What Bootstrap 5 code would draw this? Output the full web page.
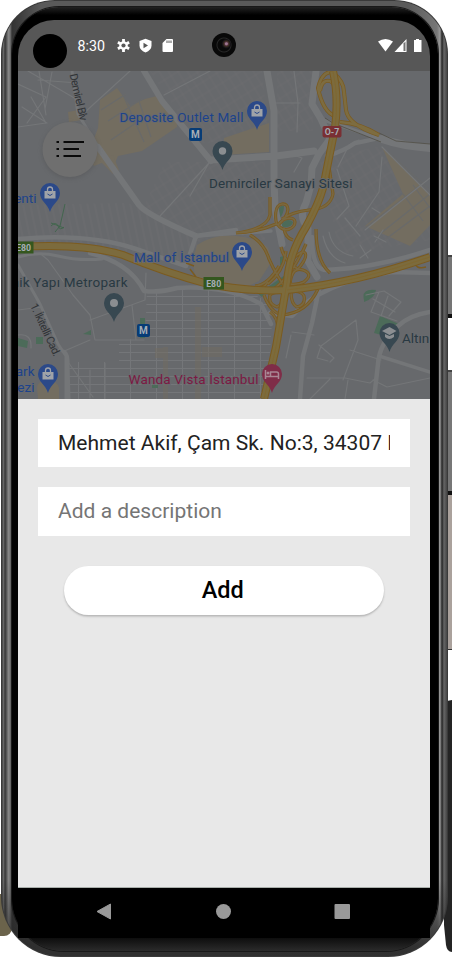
<!DOCTYPE html>
<html lang="en">
<head>
<meta charset="utf-8">
<meta name="viewport" content="width=device-width, initial-scale=1">
<title>Add address</title>
<link href="https://cdn.jsdelivr.net/npm/bootstrap@5.3.0/dist/css/bootstrap.min.css" rel="stylesheet">
<style>
body{width:452px;height:957px;font-family:Roboto,"Noto Sans",sans-serif;background:#fff}
.desk{width:452px;height:957px}
.desk-left{left:0;top:894px;width:12px;height:42px;background:#6b634b;border-radius:0 0 8px 0}
.desk-right{left:444px;top:0;width:8px;height:957px}
.device{width:447px;height:957px;margin-left:1px;border-radius:54px 54px 60px 60px;padding:7px 10px 6px 11px;box-shadow:inset 0 0 0 1px #3a3a3a;
 background:linear-gradient(transparent 0 880px,#262626cc 945px),linear-gradient(90deg,#333 0 1px,#666 2px 3px,#292929 4px,#555 5px 6px,#888 7px,#777 9px,#333 11px,#5a5a5a 40px 407px,#777 436px,#999 439px,#242424 441px,#666 443px,#3a3a3a 447px)}
.bezel{height:944px;border-radius:47px 47px 52px 52px;padding:13px 7px 0 6px;background:linear-gradient(#222 0,#000 8px 925px,#2b2b2b 944px);box-shadow:0 0 0 1px #191919}
.screen{width:412px;border-radius:36px 36px 0 0}
.status{height:51px;background:#575757;color:#fff}
.clock{font-size:14.2px;line-height:20px;margin-left:59.500px;width:29px;white-space:nowrap}
.lens{left:32px;top:34px;width:34px;height:34px;background:#000}
.camera{left:211px;top:33px;width:24px;height:24px;background:radial-gradient(circle at 60% 45%,#9d7890 0 1px,#51313b 2px,#302719 3px,#171318 4px,transparent 5px),radial-gradient(circle,#090909 0 6px,#262626 7px,#080808 8px)}
.map-area{height:328px;background:#66686c}
.map-area svg{display:block}
.sheet{height:489px;background:#e8e8e8;padding:20px 20.500px 0 20px;border-bottom:1px solid #a9afab;gap:19.800px}
.sheet .field{height:48.400px;min-height:0;border:0;background:#fff;color:#222;padding:0 20px;font-size:21px;line-height:48px;letter-spacing:.015px}
.field::placeholder{color:#757575;opacity:1}
.sheet .field:focus{box-shadow:none}
.sheet .add{width:320px;height:49px;margin-top:10.500px;background:#fff;color:#000;font-size:23.500px;font-weight:500;line-height:48px;padding:0 2px 0 0;box-shadow:0 1.500px 2px #b4b4b4}
.navkeys{height:50px;background:#000}
</style>
<script src="https://cdn.jsdelivr.net/npm/bootstrap@5.3.0/dist/js/bootstrap.bundle.min.js"></script>
</head>
<body class="m-0 overflow-hidden">
<div class="desk position-relative overflow-hidden">
 <div class="desk-left position-absolute"></div>
 <svg class="desk-right position-absolute" viewBox="444 0 8 957">
  <path fill="#757575" d="M444 255h8v62h-8z"/><path fill="#111" d="M444 314h8v4h-8zM444 491h8v4h-8z"/><path fill="#444" d="M444 255h8v2h-8zM444 370h8v2h-8z"/>
  <path fill="#777" d="M444 372h8v119h-8z"/><path fill="#aaa19c" d="M444 495h8v154h-8z"/><path fill="#333" d="M444 649h8v1h-8z"/>
  <path fill="#242424" d="M444 703q4-3 8-3v252q-5 0-6-7l-2-20z"/>
 </svg>
 <main class="device position-relative">
 <div class="bezel">
  <div class="screen d-flex flex-column overflow-hidden">
   <header class="status d-flex align-items-center flex-shrink-0">
    <span class="clock">8:30</span>
    <svg width="62" height="18" viewBox="114.500 37 62 18" class="ms-2" fill="#fff">
     <circle cx="123" cy="45.500" r="4.200"/><path stroke="#fff" stroke-width="2.800" d="M123 39v13M117.400 42.300l11.200 6.400M117.400 48.700l11.200-6.400"/><circle cx="123" cy="45.500" r="2.100" fill="#575757"/>
     <path d="M145 38.800l6 2.300v4.400q0 4.600-6 7-6-2.400-6-7v-4.400z"/><path fill="#575757" d="M143 42.800l4.500 2.700-4.500 2.800z"/>
     <path d="M166 39h5.500q1 0 1 1v11q0 1-1 1h-8.500q-1 0-1-1v-8z"/><path stroke="#575757" d="M166.500 40.500v2.500M168.500 40.500v2.500M170.500 40.500v2.500"/>
    </svg>
    <svg width="48" height="18" viewBox="378 37 48 18" class="ms-auto me-1" fill="#fff">
     <path d="M378 41.500q7.500-5 15 0L385.500 51.500z"/><path d="M406.500 39v13h-12z"/><path fill="#737373" d="M403.500 43.500l2-2V51h-2z"/><path d="M416 39h3v1h2.500v12h-7.500V40h2z"/>
    </svg>
   </header>
   <section class="map-area flex-shrink-0" aria-label="Map">
    <svg width="412" height="328" viewBox="18 71 412 328" font-family="Roboto,'Noto Sans',sans-serif">
     <defs>
      <pattern id="blocks" width="26" height="8" patternUnits="userSpaceOnUse"><path d="M0 .5H26M.5 0V8" stroke="#747679" stroke-width="1"/></pattern>
      <pattern id="plots" width="8" height="11" patternUnits="userSpaceOnUse" patternTransform="rotate(-32)"><path d="M0 1H8M1 0V11" stroke="#6b6d70" stroke-width=".7"/></pattern>
      <pattern id="strips" width="7" height="40" patternUnits="userSpaceOnUse" patternTransform="rotate(-12)"><path d="M1 0V40" stroke="#6e7073" stroke-width=".7"/></pattern>
      <path id="pin" d="M0 19C-2 11-10 8-10 0A10 10 0 1 1 10 0C10 8 2 11 0 19z"/>
      <g id="bag" fill="none" stroke="#a0a3a8"><path fill="#a0a3a8" stroke="none" d="M-5.500-2H5.500V5.500H-5.500z"/><path stroke-width="1.300" d="M-2.500-2v-1.500a2.500 2.500 0 0 1 5 0V-2"/><path stroke="#2b4989" d="M-2.500 1q2.500 3 5 0"/></g>
      <path id="ramps" d="M236 233q22-1 40-9M270 197v18q-3 14-34 18M277 225c-2-6-3-20 5-21s9 10-4 21c5-8 17-9 17-3s-10 12-17 3M282 219q10-7 27-9 21-1 24-16l-5-34M250 235q14 8 19 24 8 18 18 31M281 247q4 16 17 22M268 284q16-13 18-33M273 290q20-16 33-46M290 262q12-13 15-9t-7 16M290 284q2-18 13-14t1 12q-6 3-14 2M284 292q0 12-7 15-9-3-7-12 4-4 14-3M291 292q0 12 6 15 9-2 7-11-3-6-13-4M318 289q-11 24-36 26-12-3-18-20M316 229q0 32 14 44M293 240q-8-2-9-12M240 291q20 3 28-9M270 312q8 5 8 18M255 286q13-1 24-20"/>
      <path id="north" d="M332 72q12 9 12 20l2 18q2 15 33 25M335 116q-12-4-17-28 4-17 15-16M320 91q2-12 10-10 8 3 5 30M340 122q19 1 39 13"/>
      <path id="highway" d="M18 247q66-4 105 8 41 17 85 29 42 8 79 6 68-7 143-33M333 71q6 27 2 57l-12 60q-4 15-17 39-17 27-19 55l-11 65-12 52"/>
      <filter id="soft" x="-30%" y="-30%" width="160%" height="160%"><feGaussianBlur stdDeviation="2"/></filter>
     </defs>
     <path fill="#67696c" d="M18 71h412v328H18z"/>
     <path fill="url(#plots)" d="M160 71h102l7 68-70 4-49-72zM165 162h100v78l-66 2-58-30zM277 71h36v60h-36zM320 160l60-14 50 50v44l-90 15z"/>
     <path fill="url(#strips)" d="M18 205l110-2 70 36v25l-60-12-120-5z"/>
     <path fill="url(#blocks)" d="M147 290h100l20 12 5 20-5 77H119v-59l26-2z"/>
     <path fill="url(#blocks)" d="M66 362h53v37H66z"/>
     <g fill="#736d60">
      <path d="M68 112l10-2 4 10-13 2zM100 100l17-12 13 18 15-7 16-4 16 22v10l-35 24-24 5-6 14-8-8-10 4-6-12 10-26z"/>
      <path d="M224 138l45-15v29l-45 3zM193 260l4-15q18-12 40-9 23 3 31 12l4 13-13 20-15 7-49-10zM382 147l48 47v31l-20 21-45-20 38-32z"/>
      <path d="M99 160l14-5 6 15-6 4zM37 388q0-7 10-8 11 1 12 8v11H38z"/><path opacity=".45" d="M155 348h12v10h-12zM202 347h20v10h-20zM195 307h6v92h-6zM163 347h5v52h-5z"/>
     </g>
     <g stroke="#696a6a" stroke-width="1.200" fill="none"><path d="M101 110l25-16M108 121l34-22M124 97l20 45M139 101l12 36M111 140l38-26M388 152l42 38M365 228l65-50M376 237l54-43M386 239l44-33M403 194l20 27M413 185l17 23"/></g>
     <g fill="#4c6b59"><path d="M277 214q2-10 7-8 0 8-5 13zM281 225q6-8 12-3-1 6-10 5zM268 287l17-12-2 13zM255 291l10 2-3 4zM364 300q-3-12 12-10-1 8-12 12zM380 316l19 8-6 14-19-5zM140 318h5v20h-5zM83 334l8-4v5zM18 338l10 3-1 7-9-2zM36 337h7v7h-7zM152 385h6v3h-6zM280 257l4-1-1 9h-3z"/></g>
     <g fill="none" stroke="#747678" stroke-linecap="round" stroke-linejoin="round">
      <g stroke-width="1.200">
       <path d="M18 84l28 13-19 26M28 71l48 28M38 80l40 3M39 71l7 44M52 72l-7 37M22 107l25 16M18 127l28-4M31 97l15 26M84 113l46-42M164 95l46-24M190 196l19-33-49 53M275 103h25M294 71l4 32-1 29M293 155l9 3-8 14M338 167l11-22 10-5M337 169l12 37-12 13M382 157l-3 35-23 34M382 147l48 48M365 230l65-52M372 208l8 5M345 218l15 18"/>
       <path d="M42 255l6 5 25 35 17 20 5 25h49M90 320l55-20 1-27M132 305l4 35M18 310l24-3M62 352l28-12M68 362l25 35M90 370v28M105 363v36M18 335q14-2 13 13M292 332l22 3M286 358l5-23M356 320l-35 26-4 12 11 3M356 320l2 20-15 40M307 378h38l25 5 7-6M319 345l15 13-4 4M350 350l31 10M310 399l20-20M345 399l3-19M373 380l14 7 43-9"/>
       <path d="M366 295l18-4 17 11-12 14M373 299l22 13M379 292l-8 20 26 9M388 296l-7 20M323 236q5 22 22 27M329 232q4 20 24 24M360 245l8 13M360 258l11-8M374 236l12 6M383 230l-8 12"/>
      </g>
      <path stroke-width="3" d="M72 71l6 43 27 44M18 257q20-6 40-1t44 3M18 265l22 39 18 40 8 12v43M59 350q10 0 9 13l1 36"/>
      <path stroke-width="6" d="M144 71l18 30 49 60M98 147l41 58q8 10 57 31"/>
      <path stroke-width="7" d="M267 71l7 40v66l1 31 7 36M211 160l65-4 38-5M316 71l-4 33 9 15 9 20-11 15-7 14-1 17-5 18q-8 14 2 25v33l9 16"/>
      <path stroke-width="4.500" d="M18 239q70-6 118 10l50 17 10-30 40-6M90 253q40 10 54 38 16 2 33-3 50-3 84 16l10 20M327 156q17-5 28-13 22-4 27-6M312 237q0 33 14 33 50-2 104-20M430 273l-38-1q-70 10-100 44l-22-3M319 289l-7 34-9 33-3 43M374 399l4-35q1-20 20-38 12-11 32-14"/>
      <path stroke-width="3.500" d="M379 356l51 16M196 236l75-5M321 119l56 19"/>
      <path stroke-width="8" d="M382 139q20 7 48 9"/>
     </g>
     <path fill="none" stroke="#504e45" stroke-width=".8" d="M325 118l8 5 48 19M379 133l17 8 34 3"/>
     <g fill="none" stroke-linecap="butt" stroke-linejoin="round">
      <use href="#ramps" stroke="#7b5b20" stroke-width="3.200"/><use href="#ramps" stroke="#7a6840" stroke-width="1.600"/>
      <use href="#north" stroke="#7b5b20" stroke-width="4"/><use href="#north" stroke="#7d6c40" stroke-width="2.600"/>
      <path stroke="#7b5b20" stroke-width="1.500" d="M186 263l8 3M190 269l6 8M415 261q0 9 11 6"/>
      <use href="#highway" stroke="#7b5b20" stroke-width="8"/><use href="#highway" stroke="#7c6b3d" stroke-width="6"/>
      <path stroke="#80672e" stroke-width=".8" d="M287 290q68-7 143-33M333 71q6 27 2 57l-12 60q-4 15-17 39-17 27-19 55l-11 65-12 52"/>
     </g>
     <g fill="none" stroke="#3e654b" stroke-width=".9"><path d="M65 204l-5 22-5 6M51 226q5-5 7 0t6 1M51 223l13 5"/></g>
     <g>
      <use href="#pin" x="257" y="111" fill="#2b4989"/><use href="#bag" x="257" y="111"/>
      <use href="#pin" x="50" y="193" fill="#2b4989"/><use href="#bag" x="50" y="193"/>
      <use href="#pin" x="242" y="252" fill="#2b4989"/><use href="#bag" x="242" y="252"/>
      <use href="#pin" x="48" y="374" fill="#2b4989"/><use href="#bag" x="48" y="374"/>
      <g fill="#384851"><use href="#pin" x="222.500" y="151"/><use href="#pin" x="114" y="303"/><use href="#pin" x="389.500" y="333"/></g>
      <g fill="#8b8e91"><circle cx="222.500" cy="151" r="3.700"/><circle cx="114" cy="303" r="4"/><path d="M382 331l7.500-4 7 4-7 4zM385 334v3q4 4 9 0v-3l-4.500 2z"/></g>
      <use href="#pin" x="272" y="374" fill="#7f2d48"/><path fill="none" stroke="#a98794" stroke-width="1.500" d="M265.500 370v9M265.500 376.500h13M278.500 379v-5q0-2-2-2h-6v4"/><circle cx="268" cy="373" r="1.500" fill="#a98794"/>
     </g>
     <g font-size="10" font-weight="700" text-anchor="middle" fill="#a5adb5">
      <rect x="189" y="128" width="13" height="13" rx="2" fill="#073c76"/><text x="195.500" y="138.300">M</text>
      <rect x="137" y="324" width="13" height="13" rx="2" fill="#073c76"/><text x="143.500" y="334.300">M</text>
      <rect x="322.500" y="126" width="19" height="11.500" rx="2" fill="#7a2f33"/><text x="332" y="134.900" font-size="8.800" textLength="14.500">O-7</text>
      <path fill="#34571e" d="M18 241.500h15.500v12H18zM203.500 277h20.500v12.500h-20.500z"/><text x="23.500" y="251" font-size="8.800">E80</text><text x="213.700" y="286.500" font-size="8.800">E80</text>
     </g>
     <g font-size="13.500" stroke="#686a6d" stroke-width="2" paint-order="stroke" stroke-linejoin="round">
      <g fill="#1d438b">
       <text x="119.500" y="121.500" textLength="124">Deposite Outlet Mall</text>
       <text x="36.500" y="203" text-anchor="end">enti</text>
       <text x="134" y="262" textLength="95">Mall of İstanbul</text>
       <text x="34.500" y="376" text-anchor="end">ark</text><text x="34.500" y="392" text-anchor="end">ezi</text>
      </g>
      <g fill="#293942">
       <text x="209" y="188" textLength="143.500">Demirciler Sanayi Sitesi</text>
       <text x="127.500" y="286.500" text-anchor="end" textLength="116">nik Yapı Metropark</text>
       <text x="402" y="342.500">Altın</text>
      </g>
      <text x="128.500" y="384" fill="#7c1943" textLength="130">Wanda Vista İstanbul</text>
      <g fill="#303336" stroke-width="1">
       <text transform="translate(69.500 74.500) rotate(77)" font-size="11" textLength="48">Demirel Blv</text>
       <text transform="translate(30 305.500) rotate(65)" font-size="11" textLength="57">1. İkitelli Cad.</text>
      </g>
     </g>
     <circle cx="70" cy="151" r="28" fill="#4b4c4e" opacity=".35" filter="url(#soft)"/>
     <circle cx="70" cy="149.500" r="27.500" fill="#6f6f6f"/>
     <path stroke="#090909" stroke-width="2" d="M56.500 142h2.500M63.500 142H84M56.500 149h2.500M63.500 149H79M56.500 156h2.500M63.500 156H81"/>
    </svg>
   </section>
   <form class="sheet d-flex flex-column flex-shrink-0 align-items-stretch">
    <input class="form-control field rounded-0 flex-shrink-0" type="text" aria-label="Address" value="Mehmet Akif, Çam Sk. No:3, 34307 Küçükçekmece/İstanbul">
    <input class="form-control field rounded-0 flex-shrink-0" type="text" placeholder="Add a description">
    <button class="btn add rounded-pill border-0 align-self-center" type="button">Add</button>
   </form>
   <nav class="navkeys flex-shrink-0">
    <svg class="d-block" width="412" height="50" viewBox="18 888 412 50" fill="#999"><path stroke="#999" stroke-linejoin="round" d="M97 911.500l13.500-7.500v15z"/><circle cx="223.500" cy="911.500" r="7.500"/><rect x="334.500" y="904" width="15.500" height="15" rx="1"/></svg>
   </nav>
  </div>
 </div>
  <div class="lens position-absolute rounded-circle"></div>
  <div class="camera position-absolute rounded-circle"></div>
 </main>
</div>
</body>
</html>
